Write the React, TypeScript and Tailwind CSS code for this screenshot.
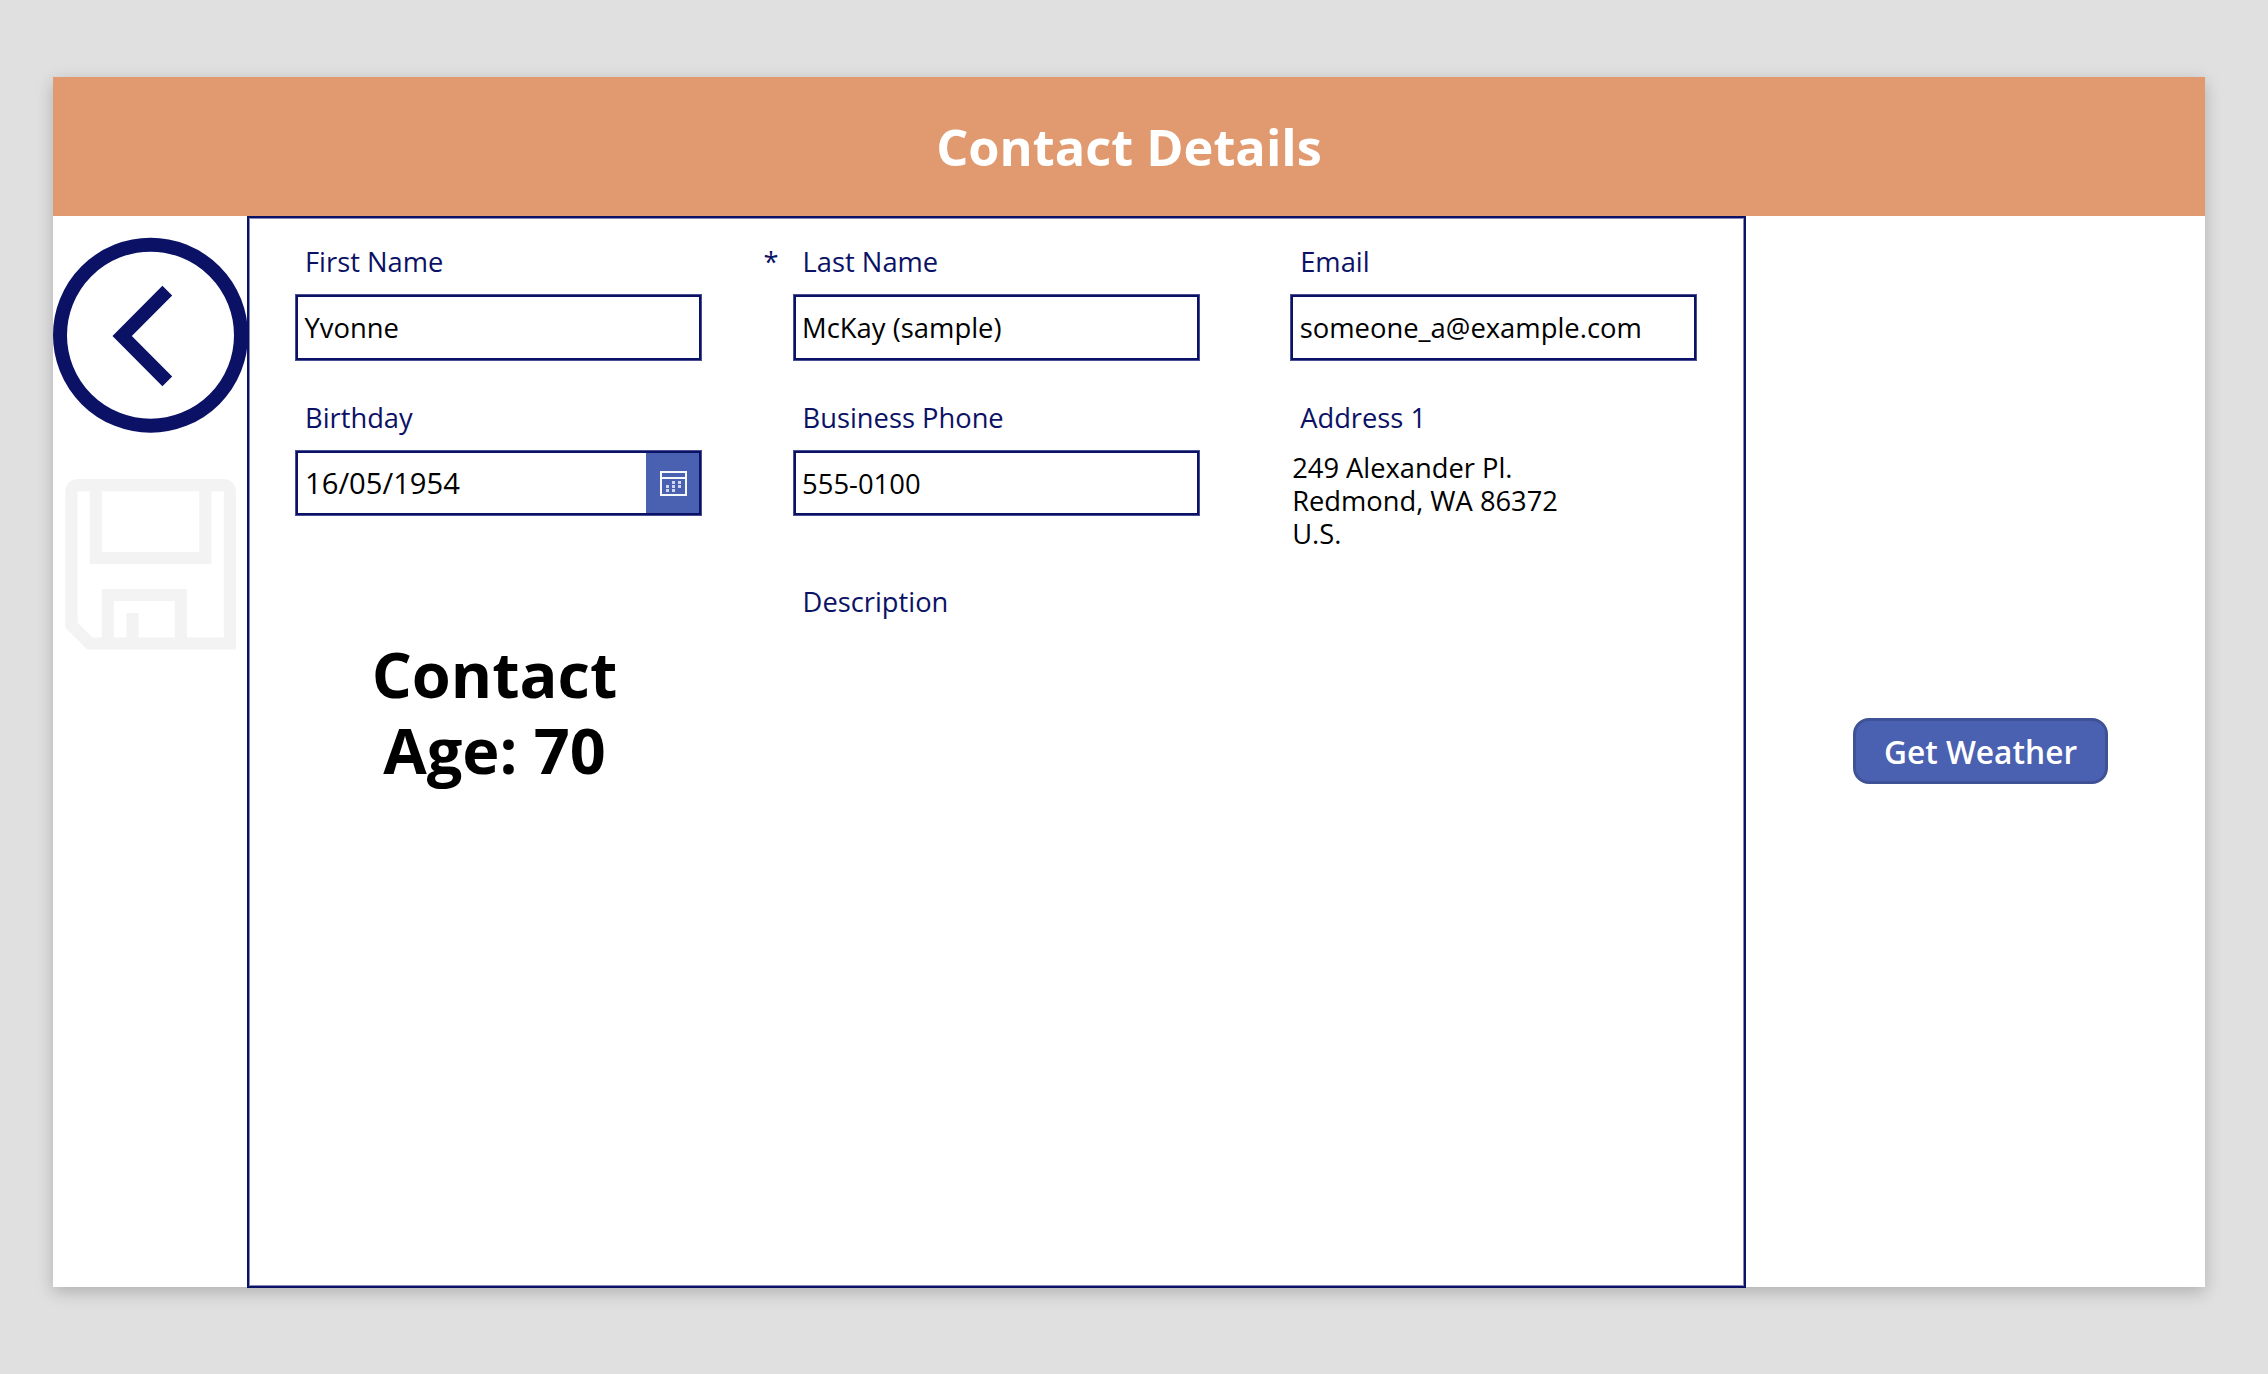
import type { ReactNode } from 'react';

function Label({ children, required }: { children: ReactNode; required?: boolean }) {
  return (
    <div className="relative h-[38px] pl-[10px] text-[27.3px] leading-[38px] text-[#0b1266]">
      {required && <span className="absolute -left-[29px] top-0">*</span>}
      {children}
    </div>
  );
}

function Box({ children, short }: { children: ReactNode; short?: boolean }) {
  return (
    <div className="mt-[13px] border border-[#4a4f93]">
      <div
        className={`flex items-center overflow-hidden border-2 border-[#0b1266] text-[27.4px] text-black ${
          short ? 'h-[64px]' : 'h-[65px]'
        }`}
      >
        {children}
      </div>
    </div>
  );
}

function BackIcon() {
  return (
    <svg viewBox="0 0 196 196" className="h-[196px] w-[196px] shrink-0" fill="none" stroke="#0b1266">
      <circle cx="97.5" cy="98.2" r="90.5" strokeWidth="14" />
      <path d="M114.3 53.700 69.200 99l45.100 45.300" strokeWidth="13.800" />
    </svg>
  );
}

function SaveIcon() {
  return (
    <svg viewBox="0 0 171 171" className="h-[171px] w-[171px]" fill="none" stroke="#f3f3f3" strokeWidth="12.200">
      <path d="M6.400 146V13Q6.400 6.100 13.300 6.100H157.800Q164.900 6.100 164.900 13V164.500H24.800L6.400 146Z" />
      <path d="M30.800 6V79H140.300V6M42.800 164V116H115.800V164M67.500 134V164" />
    </svg>
  );
}

function CalendarIcon() {
  return (
    <svg viewBox="0 0 27 25" className="h-[25px] w-[27px]" fill="none" stroke="#f7f8fc" strokeWidth="2">
      <path d="M1 1H26V24H1ZM1 7H26" />
      <path
        d="M12 11.500h3M18 11.500h3M6 15.500h3M12 15.500h3M18 15.500h3M6 19.500h3M12 19.500h3"
        stroke="#cfd6ee"
        strokeWidth="3"
      />
    </svg>
  );
}

export default function App() {
  return (
    <div className="h-[1374px] w-[2268px] overflow-hidden bg-[#e0e0e0] pl-[53px] pt-[77px] font-['Open_Sans',sans-serif]">
      <div className="flex h-[1210px] w-[2152px] flex-col bg-white shadow-[0_5px_16px_rgba(0,0,0,0.22)]">
        <header className="flex h-[139px] shrink-0 items-center justify-center bg-[#e19a70] pt-px text-[50.5px] font-bold text-white">
          Contact Details
        </header>
        <div className="flex h-[1072px] shrink-0">
          <aside className="flex w-[194px] shrink-0 flex-col pt-[21px]">
            <BackIcon />
            <div className="mt-[46px] pl-3">
              <SaveIcon />
            </div>
          </aside>
          <main className="z-10 h-[1072px] w-[1499px] shrink-0 border-2 border-[#0b1266] pl-[46px] pt-[25px] shadow-[inset_0_0_0_1px_rgba(11,18,102,0.5)]">
            <div className="grid grid-cols-[407px_407px_407px] gap-x-[90.6px]">
              <div className="h-[156px]">
                <Label>First Name</Label>
                <Box><span className="pl-[6.500px] pt-px">Yvonne</span></Box>
              </div>
              <div>
                <Label required>Last Name</Label>
                <Box><span className="pl-[6.500px] pt-px">McKay (sample)</span></Box>
              </div>
              <div>
                <Label>Email</Label>
                <Box><span className="pl-[6.500px] pt-px">someone_a@example.com</span></Box>
              </div>
              <div className="h-[184px]">
                <Label>Birthday</Label>
                <Box short>
                  <span className="flex-1 pl-[7px] pt-[2px] text-[29.2px]">16/05/1954</span>
                  <span className="flex h-full w-[53px] items-center justify-center bg-[#4a60b0] pl-[2px]">
                    <CalendarIcon />
                  </span>
                </Box>
              </div>
              <div>
                <Label>Business Phone</Label>
                <Box short><span className="pl-[6.500px] pt-[2px]">555-0100</span></Box>
              </div>
              <div>
                <Label>Address 1</Label>
                <div className="mt-[14px] pl-[2px] text-[27.3px] leading-[33px] text-black">
                  249 Alexander Pl.
                  <br />
                  Redmond, WA 86372
                  <br />
                  U.S.
                </div>
              </div>
              <div className="pr-[8px] pt-[53px] text-center text-[63px] font-bold leading-[76px] text-black">
                Contact
                <br />
                Age: 70
              </div>
              <div>
                <Label>Description</Label>
              </div>
            </div>
          </main>
          <section className="flex flex-1 justify-center pl-[10px] pt-[502px]">
            <button className="h-[66px] w-[255px] rounded-[16px] border-[3px] border-[#3f5296] bg-[#4a60b0] pt-px text-[31.7px] font-semibold leading-[60px] text-white">
              Get Weather
            </button>
          </section>
        </div>
      </div>
    </div>
  );
}
